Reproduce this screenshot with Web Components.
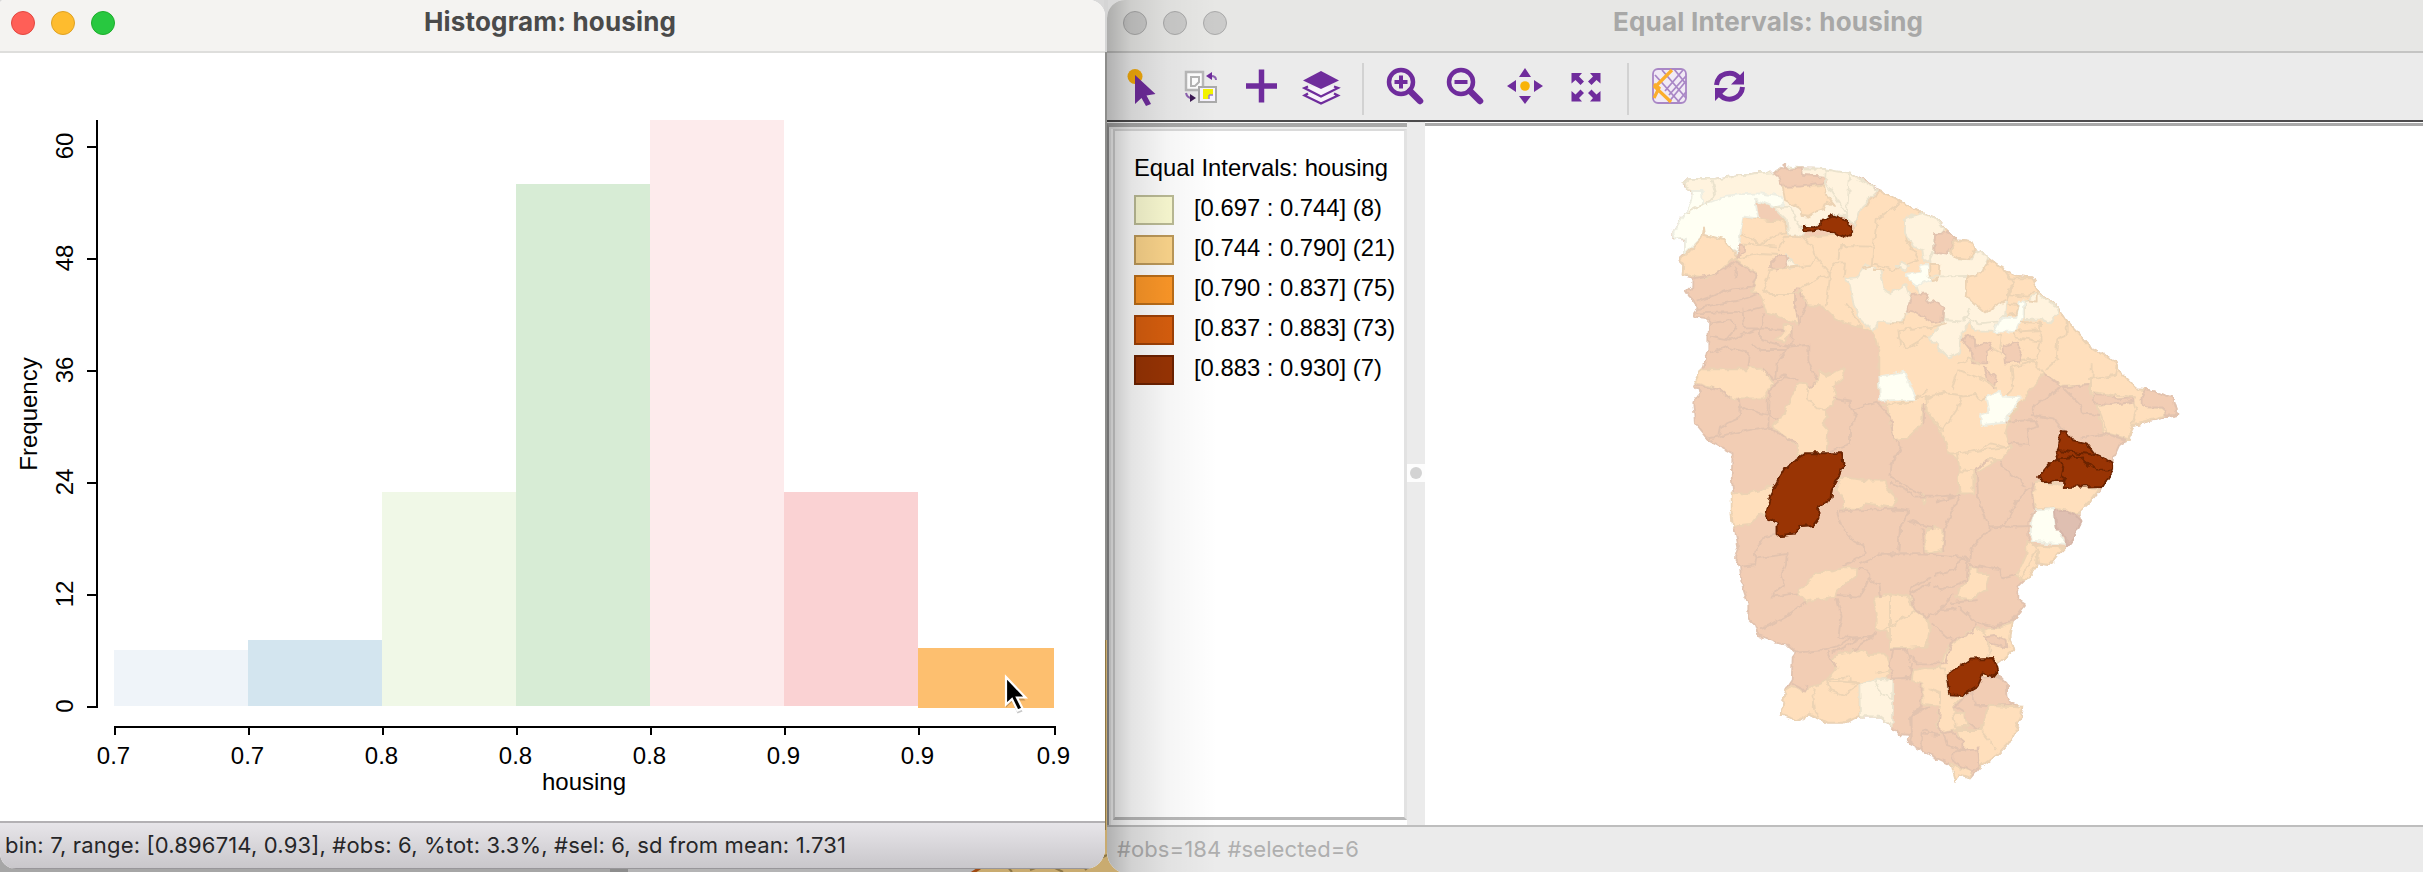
<!DOCTYPE html>
<html lang="en">
<head>
<meta charset="utf-8">
<title>GeoDa</title>
<style>
html,body{margin:0;width:2423px;height:872px;overflow:hidden;font-family:"Liberation Sans",Arial,sans-serif}
</style>
</head>
<body>
<geo-desktop>
  <app-window slot="back" class="map" caption="Equal Intervals: housing" caption-width="310" inactive>
    <tool-bar></tool-bar>
    <map-view></map-view>
    <span slot="status"><fit-text text="#obs=184 #selected=6" width="242" size="22" color="#afafaf"></fit-text></span>
  </app-window>
  <app-window slot="front" class="hist" caption="Histogram: housing" caption-width="252">
    <histogram-plot></histogram-plot>
    <span slot="status"><fit-text text="bin: 7, range: [0.896714, 0.93], #obs: 6, %tot: 3.3%, #sel: 6, sd from mean: 1.731" width="841" size="22" color="#262628"></fit-text></span>
  </app-window>
</geo-desktop>
<script>
class Base extends HTMLElement{
  connectedCallback(){ if(!this.shadowRoot){ this.attachShadow({mode:'open'}).innerHTML=this.render(); } }
}

customElements.define('fit-text',class extends Base{
  render(){
    const w=+this.getAttribute('width'),s=+this.getAttribute('size'),h=Math.round(s*1.4);
    return `<style>:host{display:block;width:${w}px;height:${h}px}svg{display:block;overflow:visible}
      text{font:${this.getAttribute('weight')||400} ${s}px Inter,"Liberation Sans",sans-serif;fill:${this.getAttribute('color')}}</style>
      <svg width="${w}" height="${h}"><text x="0" y="${Math.round(s*1.05)}" textLength="${w}">${this.getAttribute('text')}</text></svg>`;
  }
});

customElements.define('geo-desktop',class extends Base{
  render(){return `<style>
    :host{display:block;position:relative;width:2423px;height:872px;overflow:hidden;background:linear-gradient(#d9d9d9 60px,#c9ab70 60px)}
    .scrap{position:absolute;left:0;top:0}
    ::slotted(.map){position:absolute;left:1107px;top:0;width:1316px;height:874px}
    ::slotted(.hist){position:absolute;left:0;top:0;width:1105px;height:869px}
    </style>
    <svg class="scrap" width="1130" height="872"><rect y="845" width="975" height="27" fill="#b4b4b5"/><rect x="0" y="845" width="610" height="27" fill="#a6a6a6"/><rect x="610" y="845" width="18" height="27" fill="#8d8d8d"/>
    <path d="M972 873l8-5" stroke="#a04a12" stroke-width="3"/><path d="M1007 866l5 6M1030 870l8-3M1055 868l8 4M1085 870l10-9 12-6M1105 20V830" stroke="#8c7647" stroke-width="2" fill="none"/><rect x="1104" y="0" width="4" height="60" fill="#d5d5d5"/><path d="M1106 52V640" stroke="#8d8d8b" stroke-width="3"/></svg>
    <slot name="back"></slot><slot name="front"></slot>`}
});

customElements.define('app-window',class extends Base{
  render(){
    const off=this.hasAttribute('inactive');
    const c=off?['#cbcbca','#cbcbca','#cbcbca']:['#ff5f57','#febc2e','#28c840'];
    const e=off?['#a9a9a9','#a9a9a9','#a9a9a9']:['#e2463f','#dea123','#1dad2b'];
    return `<style>
    :host{display:flex;flex-direction:column;box-sizing:border-box;overflow:hidden;background:#fff;border-radius:${off?'18px 0 0 22px':'4px 16px 20px 16px'}}
    header{flex:none;border-bottom:${off?'2px solid #c4c4c3':'2px solid #dededc'};background:${off?'#e7e7e5':'#f4f3f1'};display:grid;grid-template-columns:${off?'506px 1fr':'424px 1fr'};box-sizing:border-box;height:53px}
    .dots{display:flex;gap:16px;padding:11px 0 0 ${off?16:11}px}
    i{display:block;width:24px;height:24px;border-radius:50%;box-sizing:border-box}
    .cap{padding-top:4px}
    main{flex:1;min-height:0;display:flex;flex-direction:column}
    footer{flex:none;box-sizing:border-box;${off
      ?'height:49px;border-top:2px solid #bebebe;background:#ebebeb;padding:7px 0 0 10px'
      :'height:48px;border-top:2px solid #b3b1b4;background:linear-gradient(#e7e5e9,#c9c7cb);padding:7px 0 0 5px;border-bottom:1px solid #98969a'}}
    .shade{position:absolute;left:0;top:0;bottom:0;width:110px;pointer-events:none;background:linear-gradient(90deg,rgba(0,0,0,.25),rgba(0,0,0,.11) 22%,rgba(0,0,0,.04) 55%,transparent)}
    </style>
    <header><div class="dots">${c.map((x,i)=>`<i style="background:${x};border:1px solid ${e[i]}"></i>`).join('')}</div>
    <div class="cap"><fit-text text="${this.getAttribute('caption')}" width="${this.getAttribute('caption-width')}" size="26" weight="700" color="${off?'#a8a8a7':'#4a4a4a'}"></fit-text></div></header>
    <main><slot></slot></main><footer><slot name="status"></slot></footer>${off?'<div class="shade"></div>':''}`}
});

customElements.define('tool-bar',class extends Base{
  render(){
    const P='#6f2c9c';
    const ic=b=>`<div class="b"><svg width="40" height="40" viewBox="0 0 40 40">${b}</svg></div>`;
    const sep='<div class="s"></div>';
    const lens=m=>`<circle cx="15" cy="15" r="12" fill="none" stroke="${P}" stroke-width="4.500"/><path d="M24 24l10 10" stroke="${P}" stroke-width="6.500" stroke-linecap="round"/><path d="${m}" stroke="${P}" stroke-width="4" fill="none"/>`;
    const arrow='<path d="M5.500 6H16l-3 3.500 5 5-3.500 3.500-5-5-4 3.500z"/>';
    return `<style>:host{display:flex;flex:none;height:67px;background:#ebebeb;padding-left:4px;box-sizing:border-box}
    .b{width:60px;height:67px;display:grid;place-items:center;box-sizing:border-box;padding-top:1px}svg{display:block}
    .s{width:24.500px;display:flex;justify-content:center;padding-top:10px;box-sizing:border-box}.s::before{content:"";width:2px;height:52px;background:#d2d2d2}</style>
    ${ic(`<circle cx="14" cy="9.500" r="7.500" fill="#f4ab0c"/><path d="M14 8v29l6.500-6 4.500 8 5-2-4.500-8.500 9-1.500z" fill="${P}"/>`)}
    ${ic(`<g fill="none"><path d="M5 5h17v18H5z" stroke="#b9b9b9" stroke-width="2.500" fill="#fff"/><path d="M10 10h8v5l-4 4h-4z" stroke="#b5b5b5" stroke-width="2" fill="#fff"/><path d="M18 20h17v15H18z" stroke="#aaa" stroke-width="2" fill="#f6f3ff"/><path d="M22 22h10v6h-4v4h-6z" fill="#f4f400"/><path d="M28 28h4M28 28v4" stroke="#9b7fd0" stroke-width="1.500"/><path d="M30 9q5 0 5 4" stroke="#8d62b0" stroke-width="2"/><path d="M31 5v8l-6-4z" fill="${P}"/><path d="M5 26q1 5 6 5" stroke="#8d62b0" stroke-width="2"/><path d="M9 27v8l6-4z" fill="#3d1a55"/></g>`)}
    ${ic(`<path d="M5 19h31M20.500 2.500v33" stroke="${P}" stroke-width="5.500"/>`)}
    ${ic(`<path d="M7 19.500L3.500 21 20 29.500 37 21l-4-1.500M7 26.500L3.500 28.500 20 36.500 37 28.500l-4-2" fill="#f7f2fa" stroke="${P}" stroke-width="2.300"/><path d="M20 4l18 9.500L20 22 2 13.500z" fill="${P}"/>`)}
    ${sep}
    ${ic(lens('M15 8.500v13M8.500 15h13'))}
    ${ic(lens('M8.500 15h13'))}
    ${ic(`<g fill="${P}"><path d="M19 1l6 9H13zM19 37l6-8H13zM1 19l9-6v12zM37 19l-9-6v12z"/></g><circle cx="19" cy="19" r="4.800" fill="#f8b307"/>`)}
    ${ic(`<g fill="${P}">${arrow}<g transform="translate(40 0) scale(-1 1)">${arrow}</g><g transform="translate(0 40.500) scale(1 -1)">${arrow}</g><g transform="translate(40 40.500) scale(-1 -1)">${arrow}</g></g>`)}
    ${sep}
    ${ic(`<g fill="none" stroke="#a987c6" stroke-width="1.800"><rect x="3" y="2" width="33" height="34" rx="5" fill="#f1eaf5"/><path d="M12 3l24 28M5 8l25 28M19 28L36 9M15 24L33 3M36 14L18 36M24 2L36 17M36 25l-9 11"/></g><path d="M22 3L5 20l16 15M4 17l5 4-5 10" fill="none" stroke="#fbae2c" stroke-width="3.200"/>`)}
    ${ic(`<g fill="none" stroke="${P}" stroke-width="5"><path d="M6.500 18A13 13 0 0 1 29 10.500"/><path d="M32.500 20A13 13 0 0 1 10 28"/></g><path d="M34 4v13.500H21zM5 34V21h13z" fill="${P}"/>`)}`}
});

customElements.define('map-legend',class extends Base{
  render(){
    const rows=[['#fcfcd3','#bdbd97','[0.697 : 0.744] (8)'],['#fdd68c','#be9a5a','[0.744 : 0.790] (21)'],['#fe9828','#bd6e18','[0.790 : 0.837] (75)'],['#d95f0e','#a04106','[0.837 : 0.883] (73)'],['#993404','#6d2100','[0.883 : 0.930] (7)']];
    return `<style>:host{display:flex;flex-direction:column;box-sizing:border-box;width:294px;background:#fff;border:2px solid #dadada;border-right:3px solid #e2e2e2;border-bottom:3px solid #b9b9b9;margin:2px 0 0 4px;height:691px;padding:20px 0 0 19px;color:#000;font:23.800px/34px "Liberation Sans",Arial,sans-serif;white-space:nowrap}
    .t{height:34px;margin:0 0 3px 0}.r{display:flex;align-items:center;height:40px}.r b{display:block;width:40px;height:30px;border:2px solid;box-sizing:border-box;margin:3px 20px 0 0}</style>
    <div class="t">Equal Intervals: housing</div>${rows.map(r=>`<div class="r"><b style="background:${r[0]};border-color:${r[1]}"></b><span>${r[2]}</span></div>`).join('')}`}
});

customElements.define('map-view',class extends Base{
  render(){return `<style>:host{display:grid;grid-template-columns:300px 18px 1fr;flex:1;min-height:0;border-top:2px solid #4c4b4c;background:#fff}
    .l{border-left:2px solid #999;border-top:4px solid #a9a9a9;box-shadow:inset 2px 2px #eee;margin-top:1px}
    .s{background:#ebebeb;display:flex;flex-direction:column;align-items:center}.s svg{margin-top:341px}
    .m{margin-top:1px;border-top:3px solid #a9a9a9}</style>
    <div class="l"><map-legend></map-legend></div>
    <div class="s"><svg width="18" height="20"><rect y="1" width="18" height="18" fill="#fdfdfd"/><circle cx="9" cy="10" r="6" fill="#d3d3d3"/></svg></div>
    <div class="m"><choropleth-map></choropleth-map></div>`}
});

/* Municipalities by sheet quadrant; classes: w,c,p,s,v,d fills, ls/lp/lc boundaries. */
const SHEETS=[
[0,0,[
['p','250,200 330,215 375,210 380,250 430,262 580,250 600,180 662,125 785,188 830,205 855,235 890,268 925,272 945,300 985,322 1030,360 1070,378 1115,382 1135,425 1190,470 1230,525 1290,590 1365,635 1380,665 1430,715 1460,717 1445,750 1465,772 1510,775 1512,800 1420,825 1405,870 1330,850 1310,765 1290,730 1290,705 1210,710 1150,670 1090,750 1050,800 1035,850 1050,890 1020,925 945,970 940,1030 895,1030 900,935 865,905 850,860 790,770 785,825 740,865 700,870 680,760 655,720 655,600 640,550 610,535 530,510 490,470 440,465 415,520 320,490 300,430 275,430 290,370 230,330'],
['c','74,97 85,87 170,86 230,76 255,75 280,70 340,67 375,48 430,55 490,57 575,72 655,122 605,170 585,225 555,198 520,195 470,235 430,238 430,258 385,260 380,210 345,175 285,150 200,200 100,160 97,120 78,112'],
['w','100,120 97,150 75,190 40,245 45,268 75,265 75,310 130,255 180,275 235,310 240,260 250,200 295,205 285,148 345,172 370,165 365,140 300,130 235,133 200,137 130,165 125,120'],
['p','368,110 495,105 502,140 525,168 500,155 490,178 470,185 445,200 425,198 420,175 375,150'],
['s','343,68 362,58 375,45 388,58 425,55 430,75 495,80 500,98 420,110 365,110 360,82'],
['p','132,232 135,255 190,270 232,318 180,365 140,382 68,375 70,345 57,330 80,310 128,258'],
['c','375,312 390,330 412,350 380,355'],['s','333,335 365,312 382,325 378,350 350,362 333,352'],
['s','238,285 255,282 255,305 232,320'],
['s','405,418 418,418 423,440 440,448 438,470 415,522 405,460'],
['p','400,525 395,545 375,575 350,568 370,545 370,525'],
['p','125,658 260,658 270,648 285,660 310,658 340,700 310,745 210,745 180,720 105,695'],
['p','415,698 440,700 445,712 470,700 475,660 500,675 548,655 552,680 518,710 530,745 500,780 505,800 488,820 505,840 500,908 415,915 410,885 335,830 360,810'],
['c','555,388 590,385 620,345 660,360 675,420 690,430 735,402 750,440 745,480 720,520 655,515 640,545 600,505 582,470 570,410'],
['w','655,680 732,665 770,748 660,752 658,710'],
['d','428,230 470,232 495,205 520,196 560,210 580,245 550,262 520,250 490,238 430,243'],
['d','365,990 375,955 440,910 545,910 550,940 540,975 515,1020 510,1050 475,1070 475,1105 460,1125 420,1128 405,1150 350,1156 350,1120 325,1105 318,1095 330,1040'],
['lc','155,90 165,130 140,165 M345,172 390,170 425,240 M500,60 498,100 560,195 M570,75 560,195 M78,190 130,165'],
['lp','245,250 300,280 350,255 378,250 M250,280 350,290 M235,325 300,312 355,315 M355,300 375,260 430,262 455,290 465,320 450,345 330,360 310,420 M310,420 330,432 410,432 445,400 490,380 510,378 500,470 M465,320 510,375 520,340 555,340 550,385 M535,330 540,288 640,290 635,350 610,355 M640,300 650,210 715,160 M635,340 700,360 775,330 740,270 735,210 M425,430 445,460 M555,460 580,490 610,535 M445,715 440,745 470,775 500,780 M665,765 760,755 M640,360 670,360'],
['ls','230,350 225,385 M100,385 170,370 230,335 290,375 275,410 M110,455 220,415 275,410 M105,475 245,450 300,430 M105,490 250,485 310,470 M250,470 255,535 300,535 310,490 M150,520 210,510 230,535 200,570 150,560 M205,570 300,535 370,540 M300,535 300,570 390,590 445,585 445,630 470,690 M395,580 350,640 345,690 M150,610 200,590 270,610 265,650 M305,655 340,690 370,675 415,690 M275,580 300,600 380,600 M320,740 320,790 355,810 M235,740 240,770 320,795 M110,705 180,720 210,745 M240,770 235,805 180,830 175,855 M145,865 320,830 410,880 M375,680 330,720 325,830 M470,700 445,712 M520,745 570,755 575,780 590,800 570,830 570,880 510,905 M575,780 650,755 690,800 700,865 725,890 695,940 690,990 M395,525 395,585']
]],
[690,0,[
['c','45,205 95,190 140,205 165,240 132,270 132,305 120,320 125,340 105,330 100,300 70,290 45,250'],
['c','130,308 180,305 200,325 245,328 255,300 295,322 275,370 240,380 230,440 285,487 350,445 345,495 320,520 310,545 250,545 240,515 215,550 210,610 175,625 115,560 160,515 160,480 135,455 110,465 85,425 78,405 130,385 120,330'],
['p','235,380 275,370 295,330 340,355 370,400 350,450 285,487 230,440'],
['w','45,372 90,365 92,345 112,342 120,370 125,388 80,408 60,390'],['c','20,350 35,335 60,350 45,362'],
['p','118,342 148,342 145,385 125,390 118,370'],
['s','135,252 165,250 175,245 197,265 175,305 165,313 133,305'],['p','195,272 240,272 253,298 240,327 190,322 178,305'],
['s','65,435 105,430 118,460 135,452 160,475 157,515 125,520 75,485 50,482'],
['c','440,430 500,470 505,492 480,520 455,508 405,510 405,455'],
['w','390,452 403,455 400,500 385,530 375,545 310,545 325,515 345,500 378,502'],
['s','218,570 235,552 255,572 255,590 300,575 310,595 290,605 292,640 250,640 245,605'],['s','340,590 380,575 395,605 388,632 345,638'],
['s','283,650 318,680 312,712 295,695'],
['w','290,742 330,722 335,740 395,742 380,765 352,800 350,818 275,825 270,795 298,785'],
['s','755,745 770,717 845,742 862,795 825,797 822,772 770,772 755,765'],
['p','622,770 730,752 738,780 715,868 650,850 635,800'],
['s','610,732 665,735 680,748 730,745 730,755 665,765 612,760'],
['d','512,843 530,845 545,870 590,880 620,918 670,938 668,962 640,1007 518,1010 520,990 450,992 445,980 505,925 500,905'],
['ls','460,670 515,710 570,765 575,790 630,795 M515,710 435,765 425,795 490,805 520,840 M350,815 435,810 445,830 410,840 415,885 355,880 M575,865 640,850 710,870 M600,705 520,712 M360,890 330,925 340,955 410,1010 M330,925 280,935 255,960 M105,765 100,820'],
['lp','10,180 30,155 M0,520 40,520 45,490 M30,590 25,540 130,530 170,520 M20,560 50,595 110,560 M110,720 80,745 165,730 215,735 200,780 155,845 M165,725 110,745 110,780 155,840 M215,740 255,735 275,750 290,740 M185,720 205,660 285,690 320,715 M205,640 240,625 270,645 M320,550 335,555 330,600 M310,595 335,610 M370,550 375,560 450,575 M450,515 452,580 440,625 390,630 M390,515 450,520 M375,545 455,540 M365,650 430,632 460,670 M365,650 370,715 350,735 M530,555 505,565 500,630 465,660 M530,510 530,555 M605,640 605,685 675,675 680,640 M600,680 600,725 735,745 M170,910 250,910 300,880 365,895 M360,385 425,385 M370,400 350,435 410,440 435,425 M350,460 385,465 380,490 350,495 M440,430 440,455 410,450'],
['lc','110,380 235,378 M160,510 220,515 240,475 M220,500 270,520 320,515']
]],
[0,900,[
['p','215,130 265,130 340,108 325,195 300,190 270,225 220,230 215,200'],
['p','530,120 545,80 620,92 675,92 690,125 710,145 695,172 620,160 600,178 545,180 550,150'],
['p','410,430 465,370 550,355 592,355 590,375 530,425 525,440 435,455'],
['p','640,460 650,440 710,432 750,440 765,480 800,505 810,520 805,585 700,597 680,545 650,535 650,490'],
['p','515,635 535,610 600,600 625,612 680,610 690,650 680,685 640,690 600,705 500,690 530,655'],
['p','375,720 390,710 430,722 500,690 600,700 598,800 550,818 500,818 450,790 415,812 365,795'],
['c','598,702 640,685 700,690 698,830 660,800 600,798'],
['lc','645,688 665,735 698,748'],
['lp','500,690 510,720 550,735 600,700 M575,685 575,700 M460,735 465,780 475,800 M500,685 570,682 M665,540 720,520 765,485 M465,715 460,740 M650,670 690,660'],
['d','440,10 545,10 550,40 540,75 515,120 510,150 475,170 475,205 460,225 420,228 405,250 350,256 350,220 325,205 318,195 330,140 375,55'],
['ls','345,255 310,262 285,310 290,325 380,312 378,345 365,375 375,405 340,430 335,440 410,430 M290,320 285,345 245,350 M530,180 545,230 580,270 615,290 610,315 550,350 M600,340 655,315 715,312 M540,185 700,175 750,185 720,235 715,305 M690,85 790,135 M750,210 810,235 M785,235 790,310 M595,355 625,362 625,395 600,440 530,435 M625,385 655,405 660,440 M435,455 395,490 340,520 300,535 M530,445 545,500 535,560 580,565 640,560 650,540 M655,310 810,310 M410,608 495,600 530,590 570,565 M515,610 600,565 M575,605 650,550 M500,605 530,650 M395,700 435,722 440,705 M700,600 690,640 700,685 755,685 750,650 M750,800 755,880 M755,795 810,770 M785,845 785,900 M750,430 755,410 810,385 M700,600 740,597 750,640 M785,840 810,845']
]],
[690,900,[
['p','205,20 260,0 250,60 250,130 208,130'],['p','200,10 365,-10 330,30 290,30 255,65 210,60'],
['p','100,132 108,150 98,165'],
['p','105,240 135,232 160,240 160,298 125,310 103,300'],
['p','437,95 515,105 630,115 600,155 565,190 495,175 440,178 430,140'],
['w','432,182 492,177 497,225 530,285 425,275 422,240'],
['v','495,185 530,182 560,195 575,215 550,265 530,290 530,268 500,235'],
['p','445,285 525,292 500,320 480,345 445,340 435,300'],['p','408,270 430,280 445,300 440,345 405,392 378,380 410,310'],
['p','240,350 262,350 262,368 297,370 290,415 235,450 200,445 210,410 235,390'],
['p','0,432 50,440 75,480 115,515 118,550 108,590 0,597'],
['p','160,625 175,590 260,530 275,545 365,518 358,565 370,600 320,640 320,670 270,710 180,690 150,660'],
['s','278,560 310,555 350,570 352,592 300,580'],
['p','70,660 100,655 165,655 175,735 200,740 245,715 190,770 205,800 200,840 150,850 140,830 150,770 100,765 100,700 65,690'],
['s','270,685 325,678 350,700 352,740 365,765 250,765 245,720'],
['s','245,720 255,765 300,770 275,840 230,820 225,790 195,770'],
['p','300,765 400,770 380,835 355,880 320,915 270,950 265,900 220,900 200,840 275,840 280,805'],
['p','180,940 245,965 240,985 210,975 195,992'],['s','160,850 185,845 220,875 220,902 170,885'],['s','190,905 265,898 268,945 245,965 190,935'],
['p','190,790 225,788 232,830 195,832'],
['d','170,675 240,628 310,627 322,665 310,680 280,670 262,710 220,735 178,733'],
['d','500,0 620,15 670,38 668,62 640,108 518,111 525,92 455,97 445,82 475,45 505,25'],
['lp','440,285 525,295 M298,570 295,605 M275,535 285,555 M275,845 320,900 M200,835 275,840 M115,715 150,725 150,760 M0,530 30,510 75,485 M390,390 440,300 M305,600 290,625'],
['ls','0,100 50,120 75,140 135,140 210,135 M210,135 165,235 160,300 M135,155 200,138 M0,180 60,185 30,235 25,300 M55,215 130,235 M30,0 0,45 M260,60 265,150 300,235 M300,235 245,295 240,340 M300,232 425,228 M345,222 385,145 435,100 M0,310 100,310 215,320 235,330 230,390 155,420 130,410 M120,400 60,430 M130,375 190,360 215,325 M60,430 75,480 110,505 150,480 195,430 M180,460 260,450 M205,470 255,515 310,530 370,510 M255,520 250,550 185,570 125,520 M150,480 200,475 M240,345 330,360 340,385 380,375 M185,570 165,640 80,640 40,600 M0,600 45,600 M0,690 60,680 70,640 M95,700 95,770 65,800 65,870 M65,800 100,775 M150,780 145,840 160,850 M95,850 150,855 M95,850 95,890 M425,100 435,180 415,220 415,270 M290,30 255,65'],
['ld','505,25 570,20 620,62 668,62 M505,30 520,55 515,80 530,90']
]]];

customElements.define('choropleth-map',class extends Base{
  render(){
    const body=SHEETS.map(([x,y,items])=>`<g transform="translate(${x} ${y})">${items.map(([k,p])=>`<path class="${k}" d="${p.split(' M').map(q=>'M'+q.replace(/^M/,'')).join(' ')}${k[0]==='l'?'':'Z'}"/>`).join('')}</g>`).join('');
    const outline='74,97 85,87 170,86 230,76 255,75 280,70 340,67 360,55 375,45 385,55 430,55 490,57 520,68 575,72 610,90 662,125 700,145 785,188 830,205 855,235 890,268 925,272 945,300 985,322 1030,360 1070,378 1115,382 1135,425 1190,470 1230,525 1290,590 1365,635 1380,665 1430,715 1460,717 1535,742 1552,795 1490,808 1420,825 1405,870 1380,880 1362,920 1360,962 1328,1010 1320,1020 1290,1055 1255,1090 1265,1115 1240,1165 1220,1190 1190,1220 1170,1245 1130,1240 1095,1290 1075,1310 1075,1350 1095,1363 1070,1395 1050,1420 1048,1465 1060,1500 1010,1540 1012,1570 1040,1600 1042,1640 1055,1660 1090,1675 1070,1735 1045,1780 1010,1815 960,1850 930,1885 900,1875 885,1892 880,1855 865,1840 810,1815 750,1780 740,1770 750,1755 715,1752 695,1730 660,1700 600,1700 550,1718 500,1718 450,1690 415,1712 365,1695 375,1620 395,1590 398,1525 410,1508 385,1485 350,1478 295,1458 285,1425 265,1405 265,1360 245,1300 240,1250 225,1225 235,1190 222,1130 215,1095 220,1030 215,980 218,910 145,870 105,820 100,760 120,730 105,710 130,655 145,600 145,560 148,505 100,500 110,470 80,425 97,410 97,383 68,375 70,345 55,330 75,310 75,270 40,262 40,245 75,190 100,150 95,120 75,110';
    return `<style>:host{display:block}svg{display:block;margin-left:235px;margin-top:24px}
    path{stroke-width:5.500;stroke-linejoin:round}
    .w{fill:#fffff3;stroke:#eeeee2}.c{fill:#fff3de;stroke:#ebe3ce}.p{fill:#ffdfbc;stroke:#ecd3b4}.s{fill:#f2cdb4;stroke:#e2c3af}.v{fill:#dfbfb1;stroke:#d6b6a9}.d{fill:#993404;stroke:#6b2300}
    .ls,.lp,.lc,.ld{fill:none}.ls{stroke:#e2c3af}.lp{stroke:#ecd3b4}.lc{stroke:#ebe3ce}.ld{stroke:#6b2300}</style>
    <svg width="530" height="650" viewBox="0 0 1590 1950"><defs><filter id="rough" x="0" y="0" width="1590" height="1950" filterUnits="userSpaceOnUse" color-interpolation-filters="sRGB"><feTurbulence type="fractalNoise" baseFrequency=".045" numOctaves="2" seed="4"/><feDisplacementMap in="SourceGraphic" scale="19" xChannelSelector="R" yChannelSelector="G"/></filter></defs>
    <g filter="url(#rough)"><path class="s" d="M${outline}Z"/>${body}</g></svg>`}
});

customElements.define('histogram-plot',class extends Base{
  render(){
    const xs=[114,248,382,516,650,784,918],tops=[650,640,492,184,120,492,648],fill=['#eff4f9','#d3e5ef','#f0f8e7','#d7ecd5','#fdebec','#fad2d3','#fdbf6f'];
    const bars=xs.map((x,i)=>`<rect x="${x}" y="${tops[i]}" width="${i==6?136:134}" height="${(i==6?708:706)-tops[i]}" fill="${fill[i]}"/>`).join('');
    const yt=[0,12,24,36,48,60].map((v,i)=>{const y=707-112*i;return `<path d="M87 ${y}h11"/><text transform="translate(73 ${y-1}) rotate(-90)">${v}</text>`}).join('');
    const xt=[115,249,383,517,651,785,919,1055].map((x,i)=>`<path d="M${x} 727v8"/><text x="${x-1.500}" y="764">${['0.7','0.7','0.8','0.8','0.8','0.9','0.9','0.9'][i]}</text>`).join('');
    return `<style>:host{display:block;flex:1;background:#fff}svg{display:block}text{font:24px "Liberation Sans",Arial,sans-serif;text-anchor:middle;fill:#000;stroke:none}</style>
    <svg width="1105" height="768" viewBox="0 53 1105 768">${bars}<g stroke="#000" stroke-width="2" fill="none"><path d="M97 120V708M114 727H1056"/>${yt}${xt}</g>
    <text x="584" y="790">housing</text><text transform="translate(37 414) rotate(-90)">Frequency</text>
    <g transform="translate(1006 677)"><path d="M0 0v27.500l6-5.500 5.500 11.500 5-2-5.500-11h8.500z" fill="#000" opacity=".22" transform="translate(0 3)"/><path d="M0 0v27.500l6-5.500 5.500 11.500 5-2-5.500-11h8.500z" fill="#000" stroke="#fff" stroke-width="2.200"/></g></svg>`}
});
</script>
</body>
</html>
